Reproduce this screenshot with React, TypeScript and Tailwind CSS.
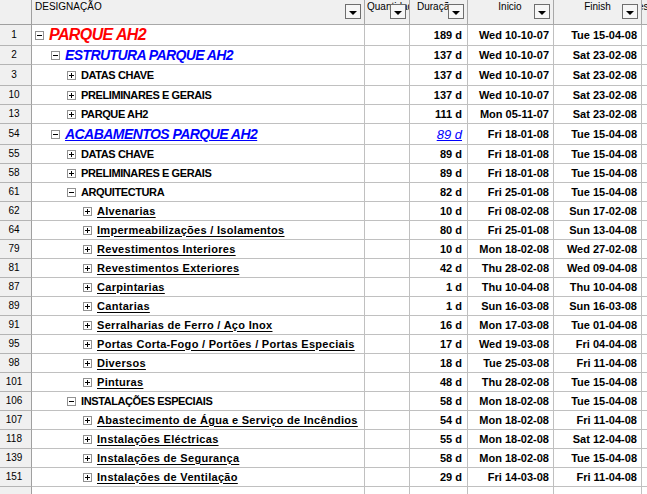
import React from "react";

type Row = {
  n: string;
  level: number;
  sign: "+" | "-";
  name: string;
  kind: "top" | "sum" | "sumLink" | "cap" | "low";
  dur: string;
  start: string;
  finish: string;
  h: string;
};

const rows: Row[] = [
  { n: "1", level: 0, sign: "-", name: "PARQUE AH2", kind: "top", dur: "189 d", start: "Wed 10-10-07", finish: "Tue 15-04-08", h: "h-[21px]" },
  { n: "2", level: 1, sign: "-", name: "ESTRUTURA PARQUE AH2", kind: "sum", dur: "137 d", start: "Wed 10-10-07", finish: "Sat 23-02-08", h: "h-[19px]" },
  { n: "3", level: 2, sign: "+", name: "DATAS CHAVE", kind: "cap", dur: "137 d", start: "Wed 10-10-07", finish: "Sat 23-02-08", h: "h-[21px]" },
  { n: "10", level: 2, sign: "+", name: "PRELIMINARES E GERAIS", kind: "cap", dur: "137 d", start: "Wed 10-10-07", finish: "Sat 23-02-08", h: "h-[19px]" },
  { n: "13", level: 2, sign: "+", name: "PARQUE AH2", kind: "cap", dur: "111 d", start: "Mon 05-11-07", finish: "Sat 23-02-08", h: "h-[19px]" },
  { n: "54", level: 1, sign: "-", name: "ACABAMENTOS PARQUE AH2", kind: "sumLink", dur: "89 d", start: "Fri 18-01-08", finish: "Tue 15-04-08", h: "h-[21px]" },
  { n: "55", level: 2, sign: "+", name: "DATAS CHAVE", kind: "cap", dur: "89 d", start: "Fri 18-01-08", finish: "Tue 15-04-08", h: "h-[19px]" },
  { n: "58", level: 2, sign: "+", name: "PRELIMINARES E GERAIS", kind: "cap", dur: "89 d", start: "Fri 18-01-08", finish: "Tue 15-04-08", h: "h-[19px]" },
  { n: "61", level: 2, sign: "-", name: "ARQUITECTURA", kind: "cap", dur: "82 d", start: "Fri 25-01-08", finish: "Tue 15-04-08", h: "h-[19px]" },
  { n: "62", level: 3, sign: "+", name: "Alvenarias", kind: "low", dur: "10 d", start: "Fri 08-02-08", finish: "Sun 17-02-08", h: "h-[19px]" },
  { n: "64", level: 3, sign: "+", name: "Impermeabilizações / Isolamentos", kind: "low", dur: "80 d", start: "Fri 25-01-08", finish: "Sun 13-04-08", h: "h-[19px]" },
  { n: "79", level: 3, sign: "+", name: "Revestimentos Interiores", kind: "low", dur: "10 d", start: "Mon 18-02-08", finish: "Wed 27-02-08", h: "h-[19px]" },
  { n: "81", level: 3, sign: "+", name: "Revestimentos Exteriores", kind: "low", dur: "42 d", start: "Thu 28-02-08", finish: "Wed 09-04-08", h: "h-[19px]" },
  { n: "87", level: 3, sign: "+", name: "Carpintarias", kind: "low", dur: "1 d", start: "Thu 10-04-08", finish: "Thu 10-04-08", h: "h-[19px]" },
  { n: "89", level: 3, sign: "+", name: "Cantarias", kind: "low", dur: "1 d", start: "Sun 16-03-08", finish: "Sun 16-03-08", h: "h-[19px]" },
  { n: "91", level: 3, sign: "+", name: "Serralharias de Ferro / Aço Inox", kind: "low", dur: "16 d", start: "Mon 17-03-08", finish: "Tue 01-04-08", h: "h-[19px]" },
  { n: "95", level: 3, sign: "+", name: "Portas Corta-Fogo / Portões / Portas Especiais", kind: "low", dur: "17 d", start: "Wed 19-03-08", finish: "Fri 04-04-08", h: "h-[19px]" },
  { n: "98", level: 3, sign: "+", name: "Diversos", kind: "low", dur: "18 d", start: "Tue 25-03-08", finish: "Fri 11-04-08", h: "h-[19px]" },
  { n: "101", level: 3, sign: "+", name: "Pinturas", kind: "low", dur: "48 d", start: "Thu 28-02-08", finish: "Tue 15-04-08", h: "h-[19px]" },
  { n: "106", level: 2, sign: "-", name: "INSTALAÇÕES ESPECIAIS", kind: "cap", dur: "58 d", start: "Mon 18-02-08", finish: "Tue 15-04-08", h: "h-[19px]" },
  { n: "107", level: 3, sign: "+", name: "Abastecimento de Água e Serviço de Incêndios", kind: "low", dur: "54 d", start: "Mon 18-02-08", finish: "Fri 11-04-08", h: "h-[19px]" },
  { n: "118", level: 3, sign: "+", name: "Instalações Eléctricas", kind: "low", dur: "55 d", start: "Mon 18-02-08", finish: "Sat 12-04-08", h: "h-[19px]" },
  { n: "139", level: 3, sign: "+", name: "Instalações de Segurança", kind: "low", dur: "58 d", start: "Mon 18-02-08", finish: "Tue 15-04-08", h: "h-[19px]" },
  { n: "151", level: 3, sign: "+", name: "Instalações de Ventilação", kind: "low", dur: "29 d", start: "Fri 14-03-08", finish: "Fri 11-04-08", h: "h-[19px]" },
];

const GRID = "grid grid-cols-[32px_333px_45px_58px_86px_88px_1fr]";

const indentCls = ["pl-[3px]", "pl-[19px]", "pl-[35px]", "pl-[51px]"];

const nameCls: Record<Row["kind"], string> = {
  top: "text-[16px] font-bold italic text-[#ff0000] tracking-[-0.6px]",
  sum: "text-[14px] font-bold italic text-[#0000ff] tracking-[-0.6px]",
  sumLink: "text-[14px] font-bold italic text-[#0000ff] tracking-[-0.55px] underline",
  cap: "text-[11px] font-bold text-black tracking-[-0.4px]",
  low: "text-[11px] font-bold text-black tracking-[0.3px] underline underline-offset-[2px]",
};

function Toggle({ sign }: { sign: "+" | "-" }) {
  return (
    <div className="relative w-[9px] h-[9px] shrink-0 border border-[#919191] bg-white">
      <div className="absolute left-[1px] top-[3px] w-[5px] h-[1px] bg-black" />
      {sign === "+" && <div className="absolute left-[3px] top-[1px] w-[1px] h-[5px] bg-black" />}
    </div>
  );
}

function DropBtn() {
  return (
    <div className="absolute right-[3px] top-[4px] w-[16px] h-[15px] border border-[#6e6e6e] bg-[#f6f6f6] flex items-center justify-center">
      <div className="mt-[3px] w-0 h-0 border-l-[4px] border-r-[4px] border-t-[4px] border-l-transparent border-r-transparent border-t-black" />
    </div>
  );
}

const cellB = "border-r border-b border-[#c0c0c0] bg-white";
const numCell = "border-r border-b border-r-[#a0a0a0] border-b-[#b4b4b4] bg-[#f0f0f0] flex items-center justify-center pr-[3px] pb-[1px] text-[10px] text-black";
const hdr = "relative border-r border-b border-[#a8a8a8] bg-[#f0f0f0] overflow-hidden whitespace-nowrap text-[10px] leading-[12px] text-black pt-[1px]";

export default function App() {
  return (
    <div className="w-[647px] h-[494px] overflow-hidden bg-white font-['Liberation_Sans',Arial,sans-serif] select-none">
      {/* header */}
      <div className={`${GRID} h-[25px]`}>
        <div className="border-r border-b border-[#a0a0a0] bg-[#f0f0f0]" />
        <div className={`${hdr} pl-[3px]`}>
          DESIGNAÇÃO
          <DropBtn />
        </div>
        <div className={`${hdr} pl-[2px]`}>
          Quantidade
          <DropBtn />
        </div>
        <div className={`${hdr} pl-[7px]`}>
          Duração
          <DropBtn />
        </div>
        <div className={`${hdr} text-center pr-[1px]`}>
          Inicio
          <DropBtn />
        </div>
        <div className={`${hdr} text-center`}>
          Finish
          <DropBtn />
        </div>
        <div className="border-b border-[#a8a8a8] bg-[#f0f0f0] overflow-hidden whitespace-nowrap text-[10px] leading-[12px] pt-[1px] text-black">
          <span className="ml-[-4px]">es</span>
        </div>
      </div>

      {rows.map((r) => (
        <div key={r.n} className={`${GRID} ${r.h}`}>
          <div className={numCell}>{r.n}</div>
          <div className={`${cellB} flex items-center overflow-hidden whitespace-nowrap ${indentCls[r.level]}`}>
            <Toggle sign={r.sign} />
            <span className={`ml-[5px] leading-none ${nameCls[r.kind]}`}>{r.name}</span>
          </div>
          <div className={cellB} />
          <div className={`${cellB} flex items-center justify-end pr-[5px] whitespace-nowrap`}>
            {r.kind === "sumLink" ? (
              <span className="text-[13px] italic text-[#0000ff] underline leading-none">{r.dur}</span>
            ) : (
              <span className="text-[11px] font-bold text-black leading-none">{r.dur}</span>
            )}
          </div>
          <div className={`${cellB} flex items-center justify-end pr-[4px] whitespace-nowrap`}>
            <span className="text-[11px] font-bold text-black leading-none">{r.start}</span>
          </div>
          <div className={`${cellB} flex items-center justify-end pr-[4px] whitespace-nowrap`}>
            <span className="text-[11px] font-bold text-black leading-none">{r.finish}</span>
          </div>
          <div className="border-b border-[#c0c0c0] bg-white" />
        </div>
      ))}

      {/* empty trailing row */}
      <div className={`${GRID} h-[19px]`}>
        <div className={numCell} />
        <div className={cellB} />
        <div className={cellB} />
        <div className={cellB} />
        <div className={cellB} />
        <div className={cellB} />
        <div className="border-b border-[#c0c0c0] bg-white" />
      </div>
    </div>
  );
}
